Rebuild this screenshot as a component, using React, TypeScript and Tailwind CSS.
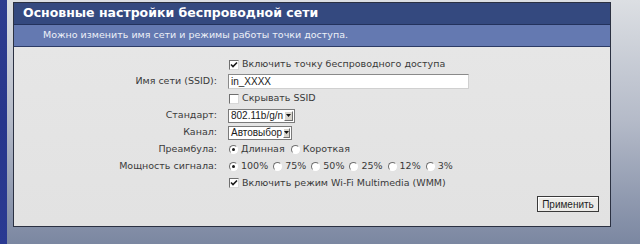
import React from "react";

function Check({ on }: { on?: boolean }) {
  return (
    <span className="inline-flex w-[10px] h-[10px] shrink-0 items-center justify-center border border-t-[#6f6f6f] border-l-[#6f6f6f] border-b-[#d8d8d8] border-r-[#d8d8d8] bg-white">
      {on && (
        <svg width="8" height="8" viewBox="0 0 8 8">
          <path d="M1 3.5 L3 5.5 L7 1.5" stroke="#1a1a1a" strokeWidth="1.6" fill="none" />
        </svg>
      )}
    </span>
  );
}

function Radio({ on }: { on?: boolean }) {
  return (
    <span className="inline-flex w-[9px] h-[9px] shrink-0 items-center justify-center rounded-full border border-t-[#6f6f6f] border-l-[#6f6f6f] border-b-white border-r-white bg-white">
      {on && <span className="w-[3px] h-[3px] rounded-full bg-[#1a1a1a]" />}
    </span>
  );
}

function Select({ value, w }: { value: string; w: string }) {
  return (
    <span className={`inline-flex h-[14px] items-stretch border border-[#7a7a7a] bg-white ${w}`}>
      <span className="flex-1 pl-[2px] leading-[12px] text-[10px] text-[#1a1a1a] font-['Liberation_Sans',sans-serif]">
        {value}
      </span>
      <span className="w-[11px] m-[1px] flex items-center justify-center bg-[#d8d5ce] border border-t-white border-l-white border-b-[#6f6f6f] border-r-[#6f6f6f]">
        <svg width="5" height="3" viewBox="0 0 5 3">
          <path d="M0 0 H5 L2.5 3 Z" fill="#111" />
        </svg>
      </span>
    </span>
  );
}

function Row({ label, children, h = "h-[17px]" }: { label?: string; children: React.ReactNode; h?: string }) {
  return (
    <div className={`flex items-center ${h}`}>
      <div className="w-[208px] pr-[5px] text-right">{label}</div>
      <div className="flex items-center gap-[3px] pl-[7px]">{children}</div>
    </div>
  );
}

const powers = ["100%", "75%", "50%", "25%", "12%", "3%"];

export default function App() {
  return (
    <div className="flex w-[640px] h-[244px] overflow-hidden font-['DejaVu_Sans',Verdana,sans-serif] text-[9.5px] text-[#3a3a3a]">
      {/* left strip */}
      <div className="w-[7px] bg-gradient-to-b from-[#2d3c8f] via-[#27368c] to-[#2a3a92]" />

      <div className="flex-1 pl-[6px] pt-[2px] bg-gradient-to-b from-[#dcdfe3] via-[#b4bac8] to-[#7b87a1]">
        <div className="w-[598px] h-[225px] flex flex-col border border-[#2b3142] bg-gradient-to-b from-[#e7e7e7] to-[#e2e2e2]">
          {/* title */}
          <div className="h-[22px] flex items-center pl-[9px] bg-[#34497f] border-b border-[#23325c] text-white font-bold text-[12.5px]">
            Основные настройки беспроводной сети
          </div>
          <div className="h-[22px] flex items-center pl-[29px] bg-[#6479b1] border-b border-[#2c3b66] text-[#eef1f8] text-[9.5px]">
            Можно изменить имя сети и режимы работы точки доступа.
          </div>

          <div className="flex flex-col pt-[9px]">
            <Row>
              <Check on />
              <span>Включить точку беспроводного доступа</span>
            </Row>
            <Row label="Имя сети (SSID):">
              <span className="w-[241px] h-[15px] -ml-[1px] flex items-center pl-[2px] bg-white border border-t-[#8a8a8a] border-l-[#8a8a8a] border-b-[#d0d0d0] border-r-[#d0d0d0] text-[10px] text-[#1a1a1a] font-['Liberation_Sans',sans-serif]">
                in_XXXX
              </span>
            </Row>
            <Row>
              <Check />
              <span>Скрывать SSID</span>
            </Row>
            <Row label="Стандарт:">
              <span className="-ml-[1px] flex">
                <Select value="802.11b/g/n" w="w-[67px]" />
              </span>
            </Row>
            <Row label="Канал:">
              <span className="-ml-[1px] flex">
                <Select value="Автовыбор" w="w-[64px]" />
              </span>
            </Row>
            <Row label="Преамбула:">
              <Radio on />
              <span className="mr-[3px]">Длинная</span>
              <Radio />
              <span>Короткая</span>
            </Row>
            <Row label="Мощность сигнала:">
              {powers.map((p, i) => (
                <React.Fragment key={p}>
                  <Radio on={i === 0} />
                  <span className="mr-[2px]">{p}</span>
                </React.Fragment>
              ))}
            </Row>
            <Row h="h-[16px]">
              <Check on />
              <span>Включить режим Wi-Fi Multimedia (WMM)</span>
            </Row>
          </div>

          <div className="flex justify-end pr-[11px] mt-[5px]">
            <button className="w-[62px] h-[16px] flex items-center justify-center border border-[#3a3a3a] bg-[#ecebe8] shadow-[inset_1px_1px_0_#fff] text-[10px] text-[#1e1e1e] font-['Liberation_Sans',sans-serif]">
              Применить
            </button>
          </div>
        </div>
      </div>
    </div>
  );
}
